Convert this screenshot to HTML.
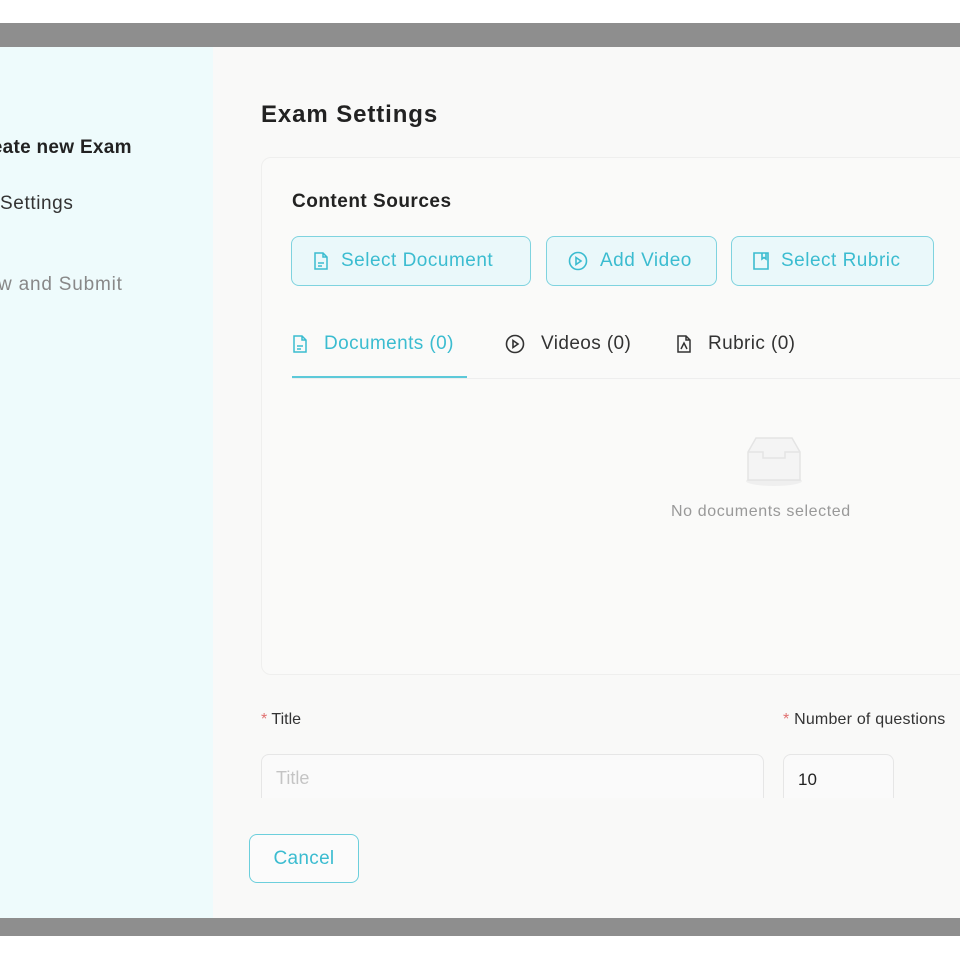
<!DOCTYPE html>
<html><head><style>
*{margin:0;padding:0;box-sizing:border-box}
body{width:960px;height:960px;background:#fff;position:relative;overflow:hidden;font-family:"Liberation Sans",sans-serif}
.abs{position:absolute}
.bar{left:0;width:960px;background:#8e8e8e}
.side{left:0;top:47px;width:213px;height:871px;background:#eefbfc}
.main{left:213px;top:47px;width:747px;height:871px;background:#f9f9f8}
.btn{border:1.5px solid #7fd3df;background:#eaf8fa;border-radius:8px;color:#3bbcd0;font-size:19px;letter-spacing:0.5px;height:50px;top:236px;display:flex;align-items:center;padding-left:21px;gap:12px}
.tab{top:333px;font-size:19px;letter-spacing:0.4px;display:flex;align-items:center;gap:16px;color:#333}
</style></head><body>
<div class="abs bar" style="top:23px;height:24px"></div>
<div class="abs side"></div>
<div class="abs main"></div>
<div class="abs bar" style="top:918px;height:18px"></div>

<div class="abs" style="left:-30px;top:137px;font-size:19px;font-weight:bold;color:#222;letter-spacing:0.3px">Create new Exam</div>
<div class="abs" style="left:0;top:193px;font-size:19px;color:#333;letter-spacing:0.6px">Settings</div>
<div class="abs" style="left:-2px;top:274px;font-size:19px;color:#888;letter-spacing:0.8px">w and Submit</div>

<div class="abs" style="left:261px;top:101px;font-size:24px;font-weight:bold;color:#222;letter-spacing:0.9px">Exam Settings</div>
<div class="abs" style="left:261px;top:157px;width:720px;height:518px;border:1px solid #efefee;border-radius:10px;background:#fafaf9"></div>
<div class="abs" style="left:292px;top:191px;font-size:19px;font-weight:bold;color:#222;letter-spacing:0.5px">Content Sources</div>

<div class="abs btn" style="left:291px;width:240px"><svg width="16" height="18" viewBox="0 0 16 18" fill="none" stroke="#3bbcd0" stroke-width="1.5"><path d="M2 1h8l4 4v12H2z M10 1v4h4 M5 11h6 M5 14h4"/></svg>Select Document</div>
<div class="abs btn" style="left:546px;width:171px"><svg width="20" height="20" viewBox="0 0 20 20" fill="none" stroke="#3bbcd0" stroke-width="1.6"><circle cx="10" cy="10" r="8.5"/><path d="M8 6.5v7l5-3.5z"/></svg>Add Video</div>
<div class="abs btn" style="left:731px;width:203px"><svg width="16" height="18" viewBox="0 0 16 18" fill="none" stroke="#3bbcd0" stroke-width="1.6"><path d="M1 1h14v16H1z M9 1v6l2-1.5 2 1.5V1"/></svg>Select Rubric</div>

<div class="abs tab" style="left:292px;color:#3bbcd0"><svg width="16" height="18" viewBox="0 0 16 18" fill="none" stroke="#3bbcd0" stroke-width="1.5"><path d="M2 1h8l4 4v12H2z M10 1v4h4 M5 11h6 M5 14h4"/></svg>Documents (0)</div>
<div class="abs" style="left:292px;top:376px;width:175px;height:3px;background:#5cc9d9"></div>
<div class="abs" style="left:292px;top:378px;width:668px;height:1px;background:#eee"></div>
<div class="abs tab" style="left:505px"><svg width="20" height="20" viewBox="0 0 20 20" fill="none" stroke="#333" stroke-width="1.6"><circle cx="10" cy="10" r="8.5"/><path d="M8 6.5v7l5-3.5z"/></svg>Videos (0)</div>
<div class="abs tab" style="left:676px"><svg width="16" height="18" viewBox="0 0 16 18" fill="none" stroke="#333" stroke-width="1.5"><path d="M2 1h8l4 4v12H2z M10 1v4h4 M5 14l3-6 3 6"/></svg>Rubric (0)</div>

<svg class="abs" style="left:736px;top:436px" width="76" height="52" viewBox="0 0 76 52" fill="none" stroke="#e4e4e4" stroke-width="1.5"><ellipse cx="38" cy="45" rx="28" ry="5" fill="#efefef" stroke="none"/><path d="M12 16l8-14h36l8 14v28H12z" fill="#f4f4f4"/><path d="M12 16h15v6h22v-6h15"/></svg>
<div class="abs" style="left:671px;top:503px;font-size:16px;color:#999;letter-spacing:0.6px">No documents selected</div>

<div class="abs" style="left:261px;top:711px;font-size:16px;color:#333"><span style="color:#e07070">* </span>Title</div>
<div class="abs" style="left:783px;top:711px;font-size:16px;color:#333;white-space:nowrap;letter-spacing:0.2px"><span style="color:#e07070">* </span>Number of questions</div>
<div class="abs" style="left:261px;top:754px;width:503px;height:44px;border:1px solid #e6e6e6;border-bottom:none;border-radius:8px 8px 0 0;background:#fafafa;padding:13px 14px;font-size:18px;color:#c4c4c4">Title</div>
<div class="abs" style="left:783px;top:754px;width:111px;height:44px;border:1px solid #e6e6e6;border-bottom:none;border-radius:8px 8px 0 0;background:#fafafa;padding:15px 14px;font-size:17px;color:#222">10</div>

<div class="abs" style="left:249px;top:834px;width:110px;height:49px;border:1.5px solid #6ccfdc;border-radius:8px;color:#3bbcd0;font-size:19px;display:flex;align-items:center;justify-content:center;background:#fbfbfb;letter-spacing:0.3px">Cancel</div>
</body></html>
